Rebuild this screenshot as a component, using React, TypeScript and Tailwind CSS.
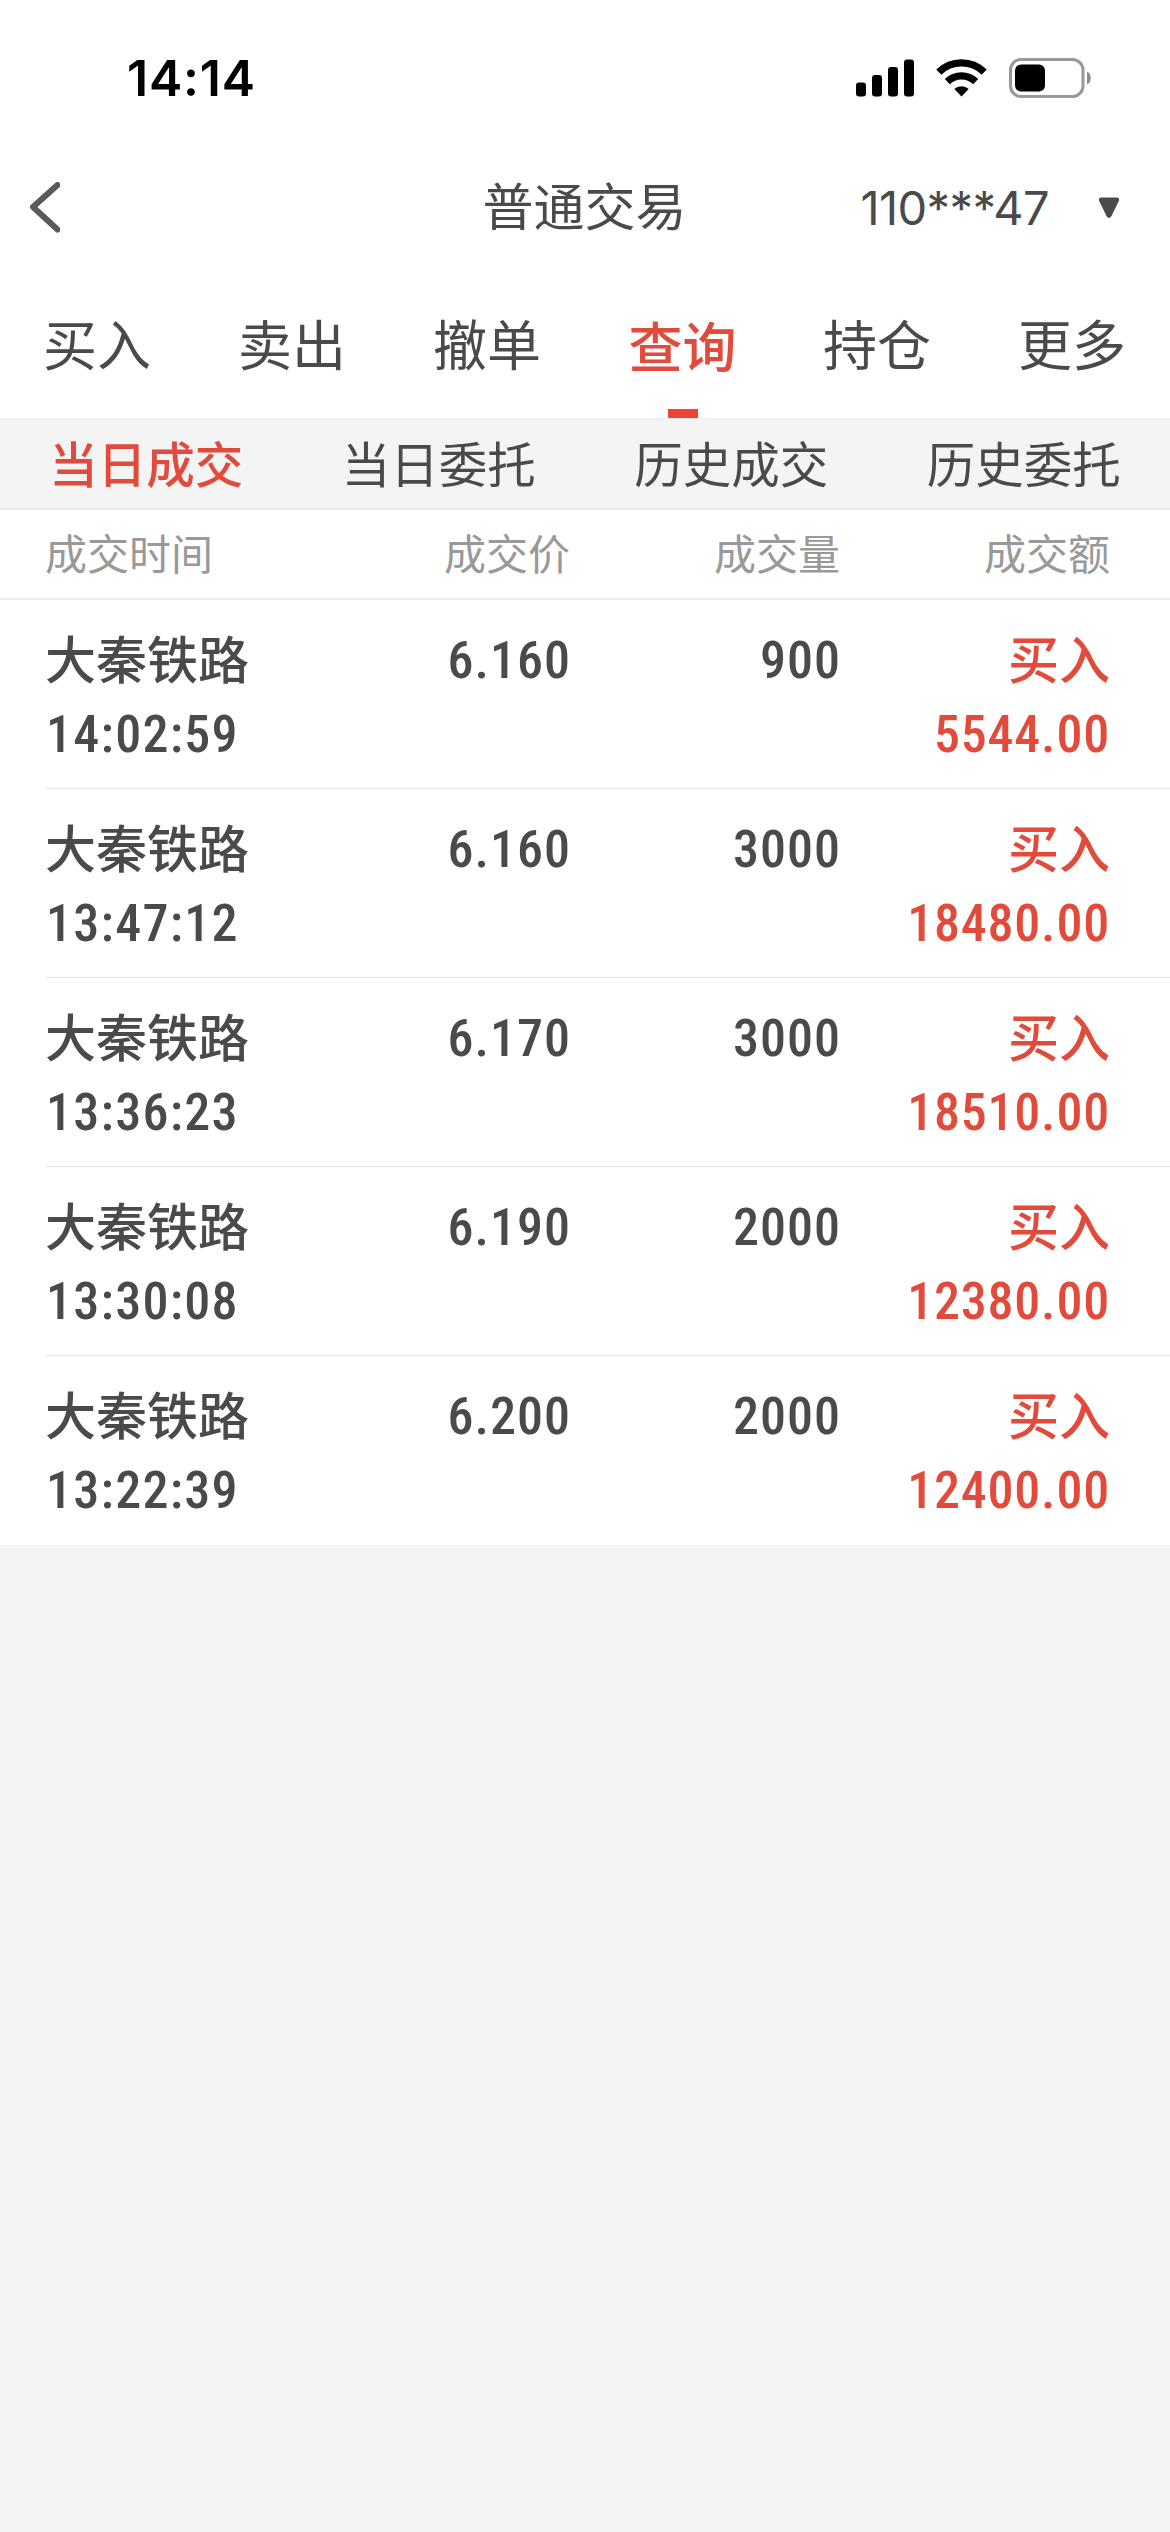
import React, { useState } from 'react';

const tabs = ['买入', '卖出', '撤单', '查询', '持仓', '更多'];
const subTabs = ['当日成交', '当日委托', '历史成交', '历史委托'];

const deals = [
    { name: '大秦铁路', time: '14:02:59', price: '6.160', volume: '900', side: '买入', amount: '5544.00' },
    { name: '大秦铁路', time: '13:47:12', price: '6.160', volume: '3000', side: '买入', amount: '18480.00' },
    { name: '大秦铁路', time: '13:36:23', price: '6.170', volume: '3000', side: '买入', amount: '18510.00' },
    { name: '大秦铁路', time: '13:30:08', price: '6.190', volume: '2000', side: '买入', amount: '12380.00' },
    { name: '大秦铁路', time: '13:22:39', price: '6.200', volume: '2000', side: '买入', amount: '12400.00' },
];

const StatusBar: React.FC = () => (
    <div className="h-[156px] pl-[127px] pr-[78px] flex items-center justify-between text-black">
        <span className="font-['Inter',sans-serif] font-semibold text-[50px] leading-none tracking-[0.8px]">14:14</span>
        <div className="flex items-center">
            <svg width="58" height="38" viewBox="0 0 58 38" fill="currentColor">
                <rect x="0" y="23.5" width="10" height="14" rx="3" />
                <rect x="16" y="16" width="10" height="21.5" rx="3" />
                <rect x="32" y="8" width="10" height="29.5" rx="3" />
                <rect x="48" y="0.5" width="10" height="37" rx="3" />
            </svg>
            <svg className="ml-[22px]" width="51" height="38" viewBox="0 0 51 38" fill="none" stroke="currentColor" strokeWidth="7.2">
                <path d="M2.8 13.2 A32.5 32.5 0 0 1 48.2 13.2" />
                <path d="M11.3 22.6 A20.5 20.5 0 0 1 39.7 22.6" />
                <path d="M25.5 37.5 L18.3 30 A10.5 10.5 0 0 1 32.7 30 Z" fill="currentColor" stroke="none" />
            </svg>
            <svg className="ml-[22px]" width="83" height="40" viewBox="0 0 83 40">
                <rect x="1.5" y="1.5" width="72.5" height="37" rx="10.5" fill="none" stroke="#999999" strokeWidth="3" />
                <rect x="6" y="6.5" width="30" height="27" rx="6" fill="currentColor" />
                <path d="M78 13.5 C83 15 83 25 78 26.5 Z" fill="#8e8e8e" />
            </svg>
        </div>
    </div>
);

const NavBar: React.FC = () => (
    <div className="h-[103px] pl-[28px] pr-[29px] grid grid-cols-[1fr_auto_1fr] items-center">
        <button className="justify-self-start">
            <svg width="32" height="52" viewBox="0 0 32 52" fill="none" stroke="#5a5a5c" strokeWidth="6" strokeLinecap="round" strokeLinejoin="round">
                <path d="M29.5 3 L5 25 L29.5 47.5" />
            </svg>
        </button>
        <h1 className="text-[51px] leading-none pb-[6px]">普通交易</h1>
        <button className="justify-self-end flex items-center gap-[49px] pr-[21px]">
            <span className="font-['Inter',sans-serif] text-[47px] leading-none tracking-[-0.6px]">110***47</span>
            <svg width="22" height="22" viewBox="0 0 22 22" fill="#4a4a4a">
                <path d="M3 0.5 H19 Q22 1 20.8 4 L13.5 19 Q11 23 8.5 19 L1.2 4 Q0 1 3 0.5 Z" />
            </svg>
        </button>
    </div>
);

const App: React.FC = () => {
    const [activeTab, setActiveTab] = useState('查询');
    const [activeSubTab, setActiveSubTab] = useState('当日成交');

    return (
        <div className="w-[1170px] h-[2532px] bg-[#f4f4f4] text-[#4a4a4a] font-['Noto_Sans_CJK_SC',sans-serif]">
            <div className="bg-white">
                <StatusBar />
                <NavBar />
                <div className="h-[159px] grid grid-cols-6">
                    {tabs.map((tab) => (
                        <button
                            key={tab}
                            onClick={() => setActiveTab(tab)}
                            className={`flex flex-col items-center justify-between text-[54px] leading-[80px] ${tab === activeTab ? 'pt-[46px] text-[#e14b3c] font-medium' : 'pt-[44px] pr-[1px]'}`}
                        >
                            {tab}
                            {tab === activeTab && <span className="w-[30px] h-[9px] bg-[#ee4433]" />}
                        </button>
                    ))}
                </div>
            </div>
            <div className="h-[92px] grid grid-cols-4 border-t border-b-2 border-t-[#ececec] border-b-[#e8e8e8]">
                {subTabs.map((tab) => (
                    <button
                        key={tab}
                        onClick={() => setActiveSubTab(tab)}
                        className={`pb-[4px] text-center text-[48.5px] leading-[80px] ${tab === activeSubTab ? 'text-[#e14b3c] font-medium' : ''}`}
                    >
                        {tab}
                    </button>
                ))}
            </div>
            <div className="bg-white">
                <div className="h-[90px] pl-[45px] pr-[60px] grid grid-cols-[1fr_270px_270px_270px] border-b-2 border-[#ececec] text-[42px] leading-[84px] text-[#999999]">
                    <span>成交时间</span>
                    <span className="text-right">成交价</span>
                    <span className="text-right">成交量</span>
                    <span className="text-right">成交额</span>
                </div>
                {deals.map((deal, i) => (
                    <div key={deal.time} className="pl-[46px]">
                        <div className={`h-[189px] pt-[20px] pr-[60px] grid grid-cols-[1fr_270px_270px_270px] grid-rows-[74px_74px] text-[51px] leading-[74px] font-medium ${i < deals.length - 1 ? 'border-b border-[#e6e6e6]' : ''}`}>
                            <span className="-ml-px">{deal.name}</span>
                            <span className="pt-[4px] -mr-px font-['Roboto_Condensed','Roboto',sans-serif] text-[52px] tracking-[1px] text-right">{deal.price}</span>
                            <span className="pt-[4px] -mr-px font-['Roboto_Condensed','Roboto',sans-serif] text-[52px] tracking-[1px] text-right">{deal.volume}</span>
                            <span className="text-right text-[#e14b3c]">{deal.side}</span>
                            <span className="pt-[4px] font-['Roboto_Condensed','Roboto',sans-serif] text-[52px] tracking-[1.3px]">{deal.time}</span>
                            <span className="col-start-4 pt-[4px] font-['Roboto_Condensed','Roboto',sans-serif] text-[52px] tracking-[0.8px] text-right text-[#e14b3c]">{deal.amount}</span>
                        </div>
                    </div>
                ))}
            </div>
        </div>
    );
};

export default App;
